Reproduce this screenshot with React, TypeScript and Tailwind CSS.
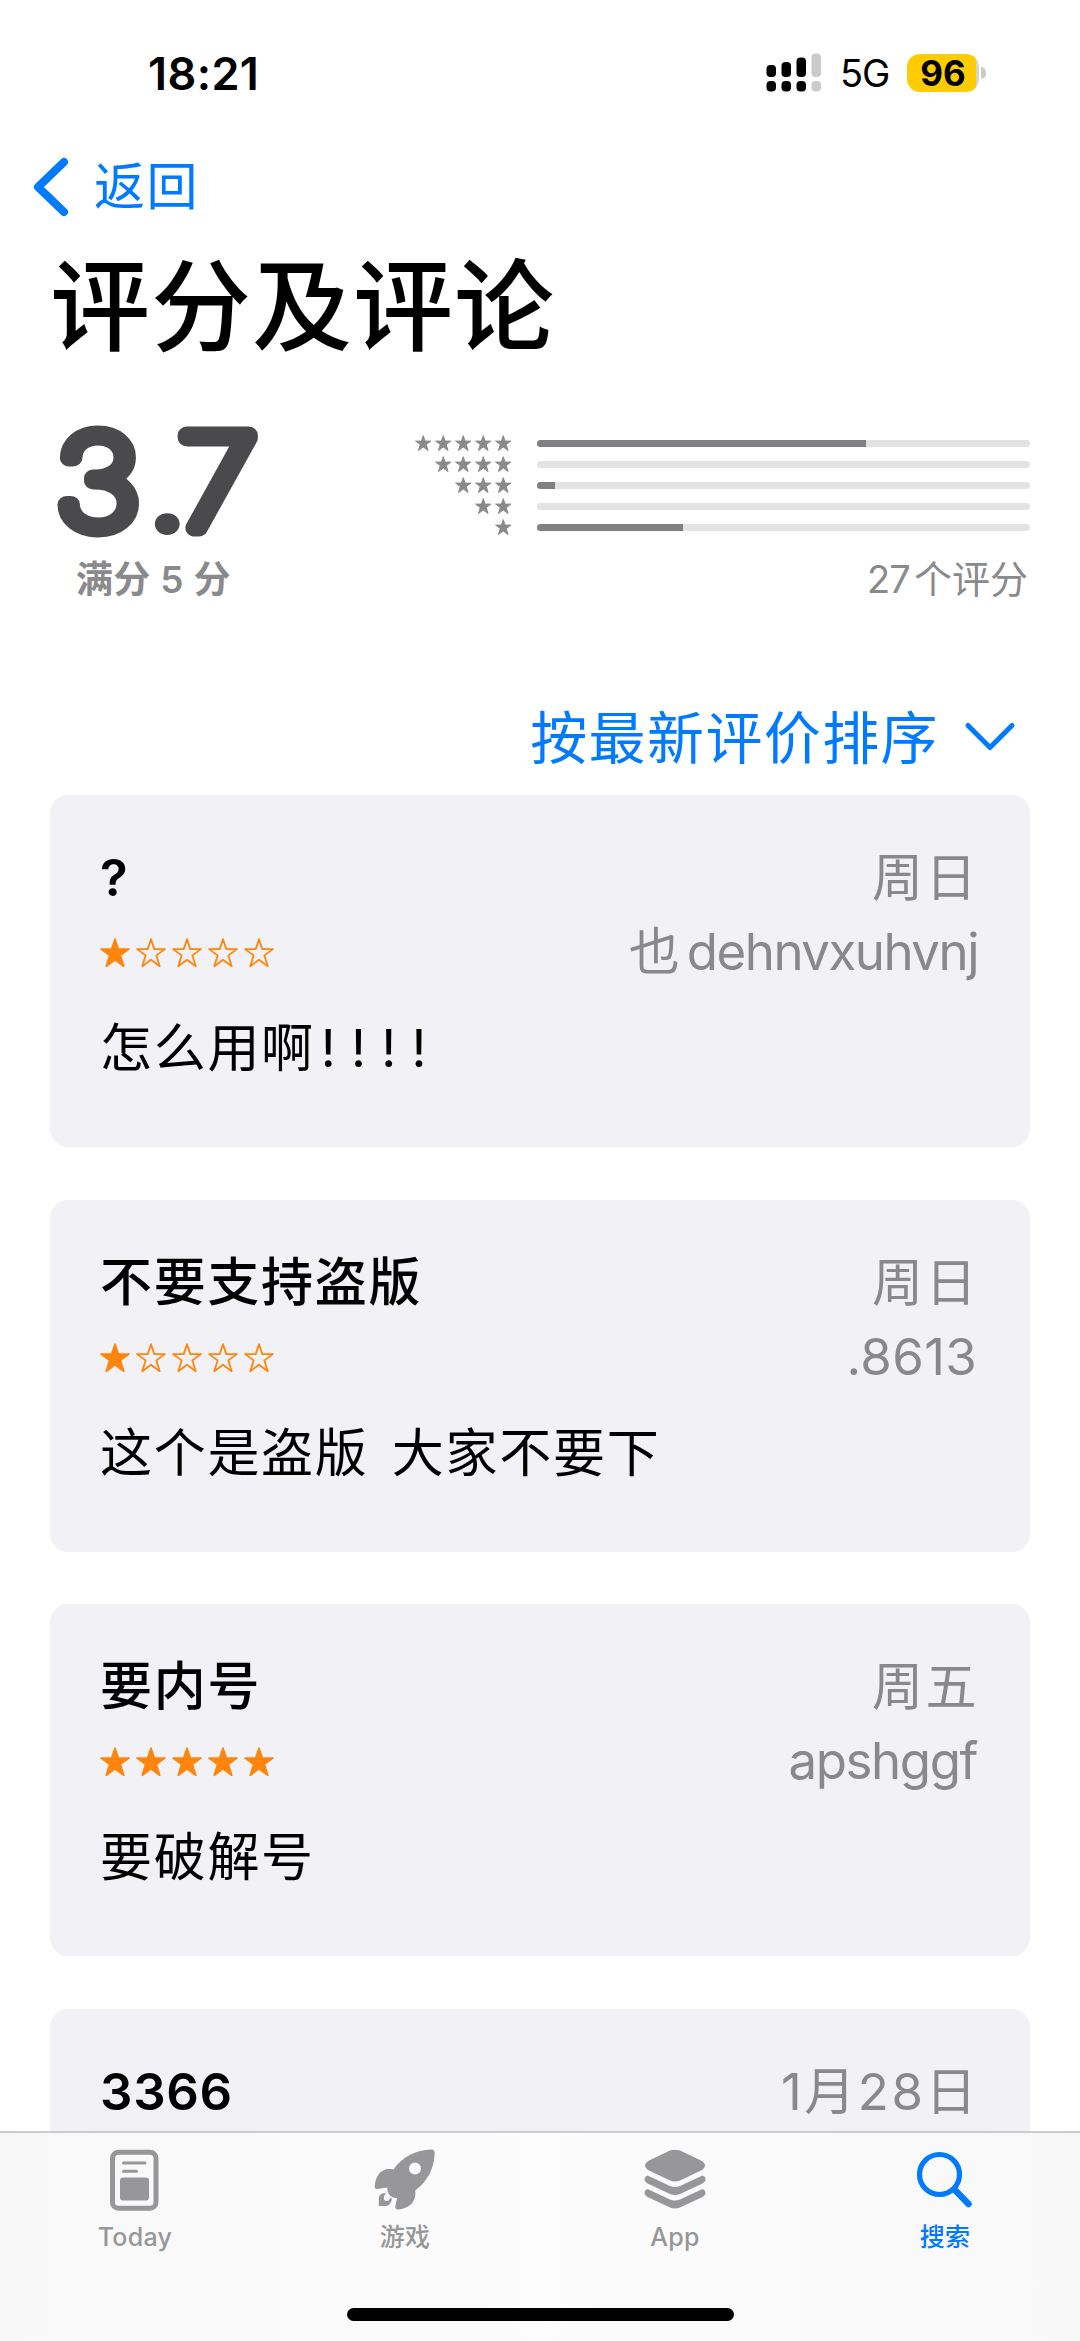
import { type ReactNode } from "react";

type Review = {
    id: number;
    title: string;
    rating: number;
    date: string;
    author: ReactNode;
    body: ReactNode;
};

const distribution = [
    { stars: 5, percent: 66.8 },
    { stars: 4, percent: 0 },
    { stars: 3, percent: 3.6 },
    { stars: 2, percent: 0 },
    { stars: 1, percent: 29.6 },
];

const reviews: Review[] = [
    {
        id: 1,
        title: "?",
        rating: 1,
        date: "周日",
        author: <>也<span className="ml-[7px] mr-[1px] tracking-[-1.5px]">dehnvxuhvnj</span></>,
        body: <>怎么用啊<span className="ml-[6px] tracking-[15.3px]">!!!!</span></>,
    },
    { id: 2, title: "不要支持盗版", rating: 1, date: "周日", author: <span className="mr-[2px] tracking-[0.3px]">.8613</span>, body: "这个是盗版 大家不要下" },
    { id: 3, title: "要内号", rating: 5, date: "周五", author: <span className="mr-[2px] tracking-[-1.4px]">apshggf</span>, body: "要破解号" },
    { id: 4, title: "3366", rating: 5, date: "1月28日", author: "", body: "" },
];

function Star({ filled = true, className }: { filled?: boolean; className?: string }) {
    return (
        <svg viewBox="0 0 30 30" className={className} fill={filled ? "currentColor" : "none"} stroke="currentColor" strokeWidth={1.8} strokeLinejoin="round">
            <path d="M15 1.2 18.3 11.1H28.9L20.4 17.4 23.7 28.2 15 21.8 6.3 28.2 9.6 17.4 1.1 11.1H11.7Z" />
        </svg>
    );
}

function StatusBar() {
    return (
        <div className="h-[150px] pt-[44px] pl-[148px] pr-[94px] flex items-start justify-between">
            <span className="text-[45px] leading-[60px] font-semibold tracking-[0.4px]">18:21</span>
            <div className="flex items-center h-[57px]">
                {/* Dual SIM signal */}
                <svg width="56" height="40" viewBox="0 0 56 40" className="mr-[18px]">
                    <rect x="0.5" y="12" width="9.5" height="12" rx="4" />
                    <rect x="15.5" y="9" width="9.5" height="15" rx="4" />
                    <rect x="30.5" y="4.5" width="9.5" height="19.5" rx="4" />
                    <rect x="45.5" y="0.5" width="9.5" height="23.5" rx="4" fill="#cbcbcb" />
                    <rect x="0.5" y="28" width="9.5" height="10.5" rx="4" />
                    <rect x="15.5" y="28" width="9.5" height="10.5" rx="4" />
                    <rect x="30.5" y="28" width="9.5" height="10.5" rx="4" />
                    <rect x="45.5" y="28" width="9.5" height="10.5" rx="4" fill="#cbcbcb" />
                </svg>
                <span className="w-[67px] text-[38px] leading-[40px] tracking-[-1px]">5G</span>
                <div className="w-[72px] h-[38px] rounded-[13px] bg-linear-to-r from-[#ffcc00] from-96% to-[#d5d5d0] to-96% flex items-center justify-center">
                    <span className="text-[35px] leading-[38px] font-bold">96</span>
                </div>
                <div className="ml-[2px] w-[5px] h-[12px] rounded-r-full bg-[#cbcbcb]" />
            </div>
        </div>
    );
}

function NavBar() {
    return (
        <button className="h-[74px] pl-[33px] flex items-center text-[#007aff]">
            <svg width="36" height="60" viewBox="0 0 36 60" fill="none" stroke="currentColor" strokeWidth="8" strokeLinecap="round" strokeLinejoin="round">
                <path d="M31 5 5 30 31 55" />
            </svg>
            <span className="ml-[25px] text-[51px] leading-[60px] tracking-[1.5px]">返回</span>
        </button>
    );
}

function RatingSummary() {
    return (
        <section className="mt-[50px] h-[190px] px-[50px] flex justify-between">
            <div className="w-[210px]">
                {/* Thin digits with a heavy round outline give the rounded numerals */}
                <svg width="224" height="180" viewBox="0 0 224 180" className="-mt-[28px] fill-[#4a4a4d] stroke-[#4a4a4d] font-thin" strokeLinejoin="round">
                    <text y="139" fontSize="128" strokeWidth="17" transform="scale(1.13 1)">
                        <tspan x="5">3</tspan>
                        <tspan x="84" y="144" fontSize="118" strokeWidth="2" className="font-bold">.</tspan>
                        <tspan x="113.5" y="139">7</tspan>
                    </text>
                </svg>
                <p className="-mt-[14px] pl-[26px] text-[37px] leading-[50px] font-semibold tracking-[0.3px] text-[#8a8a8d] whitespace-nowrap">满分 5 分</p>
            </div>
            <div className="pt-[16px] w-[616px]">
                {distribution.map((row) => (
                    <div key={row.stars} className="h-[21px] flex items-center justify-end">
                        <div className="flex gap-[3.5px] mr-[25.5px]">
                            {Array.from({ length: row.stars }, (_, i) => (
                                <Star key={i} className="w-[16.5px] h-[16.5px] text-[#8a8a8d]" />
                            ))}
                        </div>
                        <div className="w-[493px] h-[7px] rounded-full bg-[#e3e3e3] overflow-hidden">
                            <div className="h-full bg-[#808082]" style={{ width: `${row.percent}%` }} />
                        </div>
                    </div>
                ))}
                <p className="mt-[16px] pr-[2px] text-right text-[38px] leading-[50px] text-[#8a8a8d]"><span className="mr-[4px] tracking-[-0.8px]">27</span>个评分</p>
            </div>
        </section>
    );
}

function ReviewCard({ review }: { review: Review }) {
    // Latin titles need one step more weight than the CJK ones
    const latinTitle = /^[\x20-\x7e]+$/.test(review.title);

    return (
        <article className="h-[352px] shrink-0 rounded-[18px] bg-[#f1f1f6] pt-[46px] pl-[50px] pr-[51px]">
            <div className="flex justify-between text-[51px] leading-[74px]">
                <div>
                    <h2 className={latinTitle ? "font-semibold tracking-[0.7px]" : "font-medium text-[52px] tracking-[1.7px]"}>{review.title}</h2>
                    <div className="mt-[23px] flex gap-[6px]">
                        {[1, 2, 3, 4, 5].map((n) => (
                            <Star key={n} filled={n <= review.rating} className="w-[30px] h-[30px] text-[#ff850d]" />
                        ))}
                    </div>
                </div>
                <div className="text-right text-[#88888d]">
                    <p className="tracking-[2.5px]">{review.date}</p>
                    <p>{review.author}</p>
                </div>
            </div>
            <p className="mt-[23px] text-[52px] leading-[74px] tracking-[1.7px] [word-spacing:7px]">{review.body}</p>
        </article>
    );
}

function TodayIcon() {
    return (
        <svg width="62" height="62" viewBox="0 0 62 62" fill="none" stroke="currentColor">
            <rect x="8.5" y="3.2" width="43.5" height="56" rx="6" strokeWidth="5" />
            <path d="M19.5 14H41M19.5 22.3H32.5" strokeWidth="3" strokeLinecap="round" />
            <rect x="16" y="28.5" width="29" height="23" rx="3" fill="currentColor" stroke="none" />
        </svg>
    );
}

function RocketIcon() {
    return (
        <svg width="62" height="62" viewBox="0 0 62 62" fill="currentColor">
            <path
                fillRule="evenodd"
                d="M57 .5C59.5 .3 60.8 1.6 60.6 4 60.6 19 53 33 41.3 41.5 42.5 50 38 59 25 60.5 22 61 21 59.5 21.3 57L23.2 49C17 49.5 13 45 13.3 38.5L3.5 40C1.5 40.2 .5 39 .8 37 1.5 27 7 18 19.5 20.5 28 8 42 .8 57 .5ZM41 13.5A6 6 0 1 0 41 25.5 6 6 0 1 0 41 13.5Z"
            />
            <path d="M4.8 57V50C5 45.5 8.5 43.5 12 44.5 9 46.5 9 52 12.5 52 15 52 16 50 16.5 48.5 18 49.5 18 51 17.5 52 16.5 55 14 57 11 57Z" />
        </svg>
    );
}

function LayersIcon() {
    return (
        <svg width="62" height="62" viewBox="0 0 62 62" fill="currentColor">
            <path d="M26 1.5Q31 -.2 36 1.5L57 11.5Q65 16.5 57 21.5L36 31.5Q31 33.5 26 31.5L5 21.5Q-3 16.5 5 11.5Z" />
            <path d="M3.5 26.5 26 37Q31 39 36 37L58.5 26.5C62.5 28 62.5 32.5 58.5 34.5L36 45Q31 47 26 45L3.5 34.5C-.5 32.5 -.5 28 3.5 26.5Z" />
            <path d="M3.5 40 26 50.5Q31 52.5 36 50.5L58.5 40C62.5 41.5 62.5 46 58.5 48L36 58.5Q31 60.5 26 58.5L3.5 48C-.5 46 -.5 41.5 3.5 40Z" />
        </svg>
    );
}

function SearchIcon() {
    return (
        <svg width="62" height="62" viewBox="0 0 62 62" fill="none" stroke="currentColor">
            <circle cx="25.5" cy="25.5" r="20" strokeWidth="5.2" />
            <path d="M41 41 54.5 55" strokeWidth="6.5" strokeLinecap="round" />
        </svg>
    );
}

const tabs = [
    { label: "Today", icon: <TodayIcon /> },
    { label: "游戏", icon: <RocketIcon /> },
    { label: "App", icon: <LayersIcon /> },
    { label: "搜索", icon: <SearchIcon />, active: true },
];

function TabBar() {
    return (
        <nav className="h-[210px] shrink-0 border-t-2 border-[#cbcbce] bg-linear-to-r from-[#f8f8f8] via-[#fcfcfd] to-[#f8f8f8] flex flex-col items-center">
            <div className="w-full grid grid-cols-4">
                {tabs.map((tab) => (
                    <div key={tab.label} className={`pt-[16px] flex flex-col items-center ${tab.active ? "text-[#007aff]" : "text-[#979799]"}`}>
                        {tab.icon}
                        <span className="mt-[9px] text-[25px] leading-[34px] font-medium tracking-[0.3px]">{tab.label}</span>
                    </div>
                ))}
            </div>
            <div className="mt-[54px] w-[387px] h-[13px] rounded-full bg-black" />
        </nav>
    );
}

export default function App() {
    return (
        <div lang="zh-CN" className="w-[1080px] h-[2341px] flex flex-col overflow-hidden bg-white text-black font-['Inter','Noto_Sans_CJK_SC',sans-serif]">
            <main className="flex-1 min-h-0 overflow-hidden">
                <StatusBar />
                <NavBar />
                <h1 className="mt-[23px] pl-[50px] text-[100px] leading-[120px] font-medium tracking-[1px]">评分及评论</h1>
                <RatingSummary />
                {/* Sort menu */}
                <div className="mt-[88px] h-[100px] pr-[64px] flex justify-end text-[#007aff]">
                    <span className="text-[57px] leading-[88px] tracking-[1.4px]">按最新评价排序</span>
                    <svg width="52" height="32" viewBox="0 0 52 32" className="mt-[26px] ml-[25px]" fill="none" stroke="currentColor" strokeWidth="5" strokeLinecap="round" strokeLinejoin="round">
                        <path d="M4 4.5 26 26.5 48 4.5" />
                    </svg>
                </div>
                <div className="px-[50px] flex flex-col gap-[52.6px]">
                    {reviews.map((review) => (
                        <ReviewCard key={review.id} review={review} />
                    ))}
                </div>
            </main>
            <TabBar />
        </div>
    );
}
